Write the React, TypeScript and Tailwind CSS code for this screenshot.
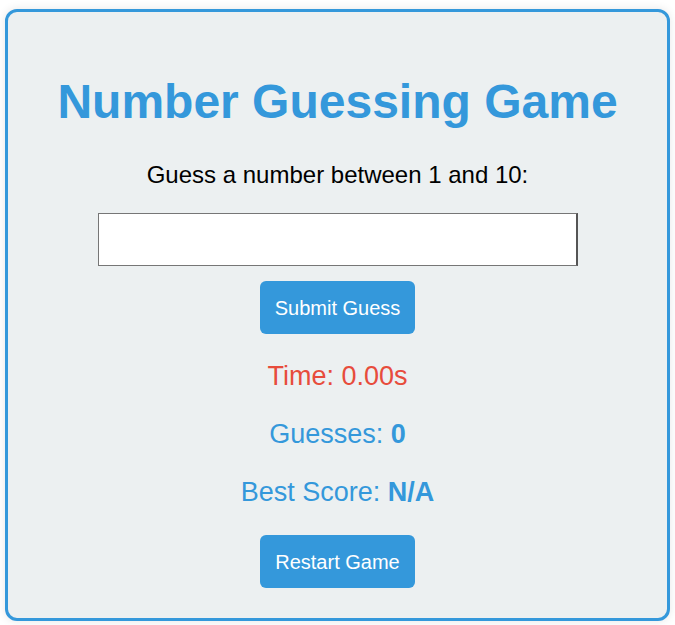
export default function App() {
  return (
    <div className="min-h-[625px] bg-white pt-[9px] px-[5px]" style={{ fontFamily: '"Liberation Sans", Arial, sans-serif' }}>
      <div className="h-[612px] rounded-[12px] border-[3px] border-[#3498db] bg-[#ecf0f1] shadow-[0_0_10px_rgba(0,0,0,0.1)] flex flex-col items-center">
        <h1 className="mt-[62px] text-[48px] leading-[56px] font-bold text-[#3498db]">Number Guessing Game</h1>
        <p className="mt-[31px] text-[24px] leading-[28px] text-black">Guess a number between 1 and 10:</p>
        <input type="text" className="mt-[24px] w-[480px] h-[53px] bg-white border border-[#767676] border-r-2 border-r-[#555]" />
        <button className="mt-[15px] w-[155px] h-[53px] rounded-[6px] bg-[#3498db] text-white text-[20px]">Submit Guess</button>
        <p className="mt-[24px] text-[27px] leading-[36px] text-[#e74c3c]">Time: 0.00s</p>
        <p className="mt-[22px] text-[27px] leading-[36px] text-[#3498db]">Guesses: <span className="font-bold">0</span></p>
        <p className="mt-[22px] text-[27px] leading-[36px] text-[#3498db]">Best Score: <span className="font-bold">N/A</span></p>
        <button className="mt-[25px] w-[155px] h-[53px] rounded-[6px] bg-[#3498db] text-white text-[20px]">Restart Game</button>
      </div>
    </div>
  );
}
